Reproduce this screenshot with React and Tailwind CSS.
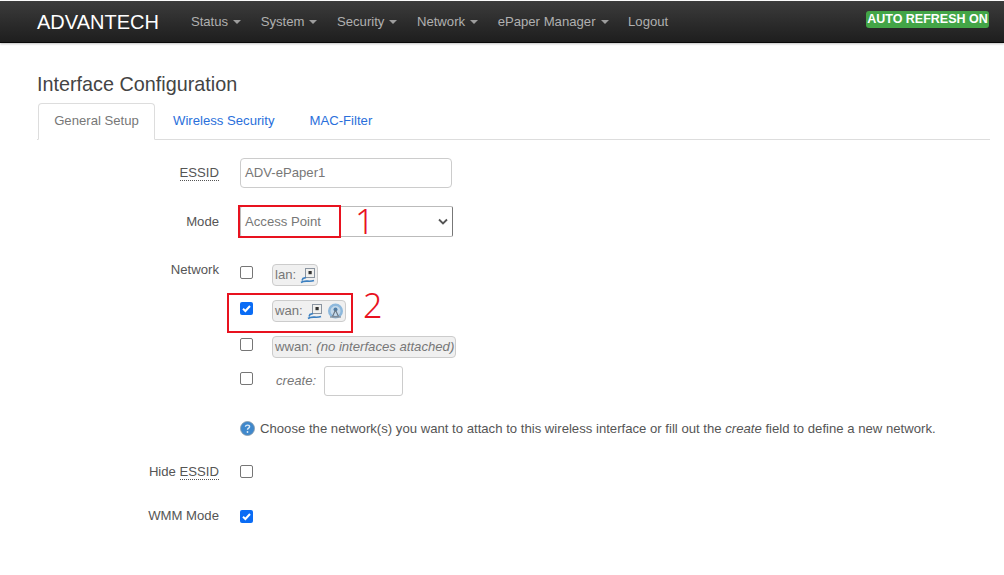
import React from 'react'

const navItems = ['Status', 'System', 'Security', 'Network', 'ePaper Manager']

const Caret = () => (
  <span className="inline-block ml-[5px] align-middle w-0 h-0 border-x-[4px] border-x-transparent border-t-[4px] border-t-[#9d9d9d]" />
)

const EthIcon = () => (
  <svg width="16" height="17" viewBox="0 0 16 17" className="inline-block">
    <rect x="5.5" y="1.5" width="9" height="9" fill="#f0f0ee" stroke="#8a94a0" strokeWidth="1" />
    <rect x="8.5" y="4" width="3.2" height="3.2" fill="#333" />
    <path d="M6 10.5 L3 11.5 L2 13.5 M1 15.5 C5 12.5 9 15.5 14 13.5" fill="none" stroke="#3b7fc0" strokeWidth="1.6" />
  </svg>
)

const WifiIcon = () => (
  <svg width="17" height="17" viewBox="0 0 17 17" className="inline-block">
    <circle cx="8.5" cy="8" r="7.5" fill="#8db8dc" />
    <circle cx="8.5" cy="8" r="5" fill="#c5d9ea" />
    <circle cx="8.5" cy="6.5" r="2" fill="#4d7fab" />
    <path d="M8.5 7 L5.5 13.5 H11.5 Z" fill="none" stroke="#6a7682" strokeWidth="1.1" />
    <path d="M3 14 H14" stroke="#8a97a4" strokeWidth="1.4" />
  </svg>
)

const HelpIcon = () => (
  <svg width="15" height="15" viewBox="0 0 15 15" className="inline-block shrink-0">
    <circle cx="7.5" cy="7.5" r="7" fill="#3f88cc" stroke="#8a9aa8" strokeWidth="0.8" />
    <path d="M5.4 5.8 C5.6 3.6 9.6 3.6 9.6 5.8 C9.6 7.2 7.5 7.2 7.5 8.8" fill="none" stroke="#dcebf7" strokeWidth="1.4" />
    <circle cx="7.5" cy="11" r="0.9" fill="#dcebf7" />
  </svg>
)

const Checkbox = ({ checked, className = '' }) => (
  checked ? (
    <span className={`flex items-center justify-center w-[13px] h-[13px] rounded-[2px] bg-[#0a6cf5] ${className}`}>
      <svg width="11" height="11" viewBox="0 0 11 11">
        <path d="M2 5.8 L4.4 8 L9 3" fill="none" stroke="#fff" strokeWidth="2" />
      </svg>
    </span>
  ) : (
    <span className={`block w-[13px] h-[13px] rounded-[2px] border border-[#767676] bg-white ${className}`} />
  )
)

const Chip = ({ children }) => (
  <span className="inline-flex items-center h-[22px] pl-[2px] pr-[1px] gap-[4px] rounded-[4px] border border-[#ccc] bg-[#f0f0f0] text-[#777] text-[13.15px] leading-none whitespace-nowrap">
    {children}
  </span>
)

const Abbr = ({ children }) => (
  <span className="border-b border-dotted border-[#555] leading-[15px] inline-block">{children}</span>
)

const Row = ({ label, className, children }) => (
  <div className={`flex ${className}`}>
    <div className="w-[219px] shrink-0 text-right text-[#555]">{label}</div>
    <div className="ml-[21px] flex-1">{children}</div>
  </div>
)

const NetRow = ({ className, checked, children }) => (
  <div className={`flex items-center ${className}`}>
    <Checkbox checked={checked} className="mb-[6px]" />
    {children}
  </div>
)

export default function App() {
  return (
    <div className="w-[1004px] h-[575px] overflow-hidden bg-white text-[13.15px] text-[#555] font-['Liberation_Sans',Arial,sans-serif]">
      <div className="h-[42px] mt-[1px] flex items-center border-b border-[#080808] bg-gradient-to-b from-[#3c3c3c] to-[#1e1e1e] shadow-[0_1px_2px_rgba(0,0,0,0.25)]">
        <span className="ml-[37px] text-[20px] text-white">ADVANTECH</span>
        <nav className="ml-[32px] flex gap-[19.5px] text-[#b0b0b0]">
          {navItems.map((item) => (
            <span key={item} className="whitespace-nowrap">{item}<Caret /></span>
          ))}
          <span>Logout</span>
        </nav>
        <span className="ml-auto mr-[15px] -mt-[5px] h-[17px] w-[123px] flex items-center justify-center rounded-[3px] bg-[#43a547] text-[12.5px] font-bold text-white whitespace-nowrap">AUTO REFRESH ON</span>
      </div>

      <div className="px-[37px]">
        <h1 className="mt-[28px] h-[33px] text-[19.8px] leading-[26px] text-[#444]">Interface Configuration</h1>
        <div className="w-[953px] h-[36px] flex items-end border-b border-[#ddd]">
          <div className="ml-[1px] w-[117px] h-[37px] -mb-[1px] pb-[2px] flex items-center justify-center bg-white rounded-t-[4px] border border-[#ddd] border-b-white text-[#777]">General Setup</div>
          <div className="ml-[18px] h-[36px] flex items-center text-[#2a6fdb]">Wireless Security</div>
          <div className="ml-[35px] h-[36px] flex items-center text-[#2a6fdb]">MAC-Filter</div>
        </div>
      </div>

      <Row className="mt-[18px] items-center" label={<Abbr>ESSID</Abbr>}>
        <div className="w-[212px] h-[30px] flex items-center px-[4px] rounded-[4px] border border-[#ccc] text-[#777]">ADV-ePaper1</div>
      </Row>

      <Row className="mt-[18px] items-center" label="Mode">
        <div className="relative w-[213px] h-[31px] flex items-center justify-between pl-[4px] pr-[3px] rounded-[2px] border border-[#bbb] border-r-[#777] text-[#777]">
          <span>Access Point</span>
          <svg width="12" height="8" viewBox="0 0 12 8">
            <path d="M2 1.5 L6 5.5 L10 1.5" fill="none" stroke="#555" strokeWidth="1.8" />
          </svg>
          <span className="absolute -left-[3px] -top-[2px] w-[103px] h-[33px] border-2 border-[#e8121f]" />
          <span className="absolute left-[114px] -top-[6px] text-[34px] leading-[40px] font-light text-[#e8121f] font-['Noto_Sans',sans-serif]">1</span>
        </div>
      </Row>

      <Row className="mt-[25px]" label={<span className="block leading-[16px]">Network</span>}>
        <div className="relative mt-[2px]">
          <NetRow className="h-[22px]">
            <span className="ml-[19px]"><Chip>lan:<EthIcon /></Chip></span>
          </NetRow>
          <NetRow checked className="mt-[14px] h-[22px]">
            <span className="ml-[19px]"><Chip>wan:<EthIcon /><WifiIcon /></Chip></span>
          </NetRow>
          <NetRow className="mt-[14px] h-[22px]">
            <span className="ml-[19px]"><Chip>wwan: <i>(no interfaces attached)</i></Chip></span>
          </NetRow>
          <NetRow className="mt-[8px] h-[30px]">
            <i className="ml-[23px] text-[#777]">create:</i>
            <span className="ml-[8px] w-[79px] h-[30px] rounded-[3px] border border-[#ccc] bg-white" />
          </NetRow>
          <span className="absolute left-[-13px] top-[29px] w-[126px] h-[40px] border-2 border-[#e8121f]" />
          <span className="absolute left-[123px] top-[21px] text-[34px] leading-[40px] font-light text-[#e8121f] font-['Noto_Sans',sans-serif]">2</span>
          <div className="mt-[23px] flex items-center gap-[5px] whitespace-nowrap">
            <HelpIcon />
            <span>Choose the network(s) you want to attach to this wireless interface or fill out the <i>create</i> field to define a new network.</span>
          </div>
        </div>
      </Row>

      <Row className="mt-[23px] items-center" label={<>Hide <Abbr>ESSID</Abbr></>}>
        <Checkbox />
      </Row>

      <Row className="mt-[25px] items-center" label="WMM Mode">
        <Checkbox checked />
      </Row>
    </div>
  )
}
